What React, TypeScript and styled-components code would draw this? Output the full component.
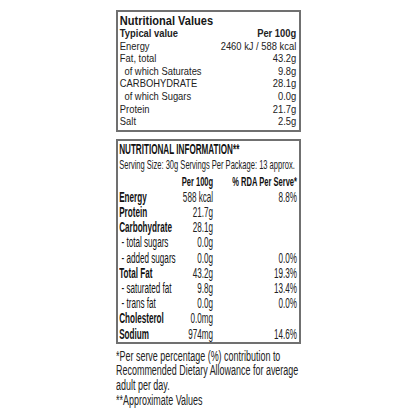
import React from 'react';
import styled, { createGlobalStyle } from 'styled-components';

const GlobalStyle = createGlobalStyle`
    html, body {
        margin: 0;
        padding: 0;
        background: #ffffff;
    }
    body {
        font-family: "Liberation Sans", Arial, sans-serif;
        color: #1a1a1a;
    }
`;

const Page = styled.div`
    width: 416px;
    height: 416px;
    display: flex;
    flex-direction: column;
    align-items: center;
    padding-top: 10px;
    box-sizing: border-box;
    overflow: hidden;
`;

const Column = styled.div`
    width: 185px;
    display: flex;
    flex-direction: column;
`;

const Panel = styled.section`
    border: 2px solid #707070;
    overflow: hidden;

    & + & {
        margin-top: 7px;
    }
`;

// the label uses a condensed face, so the content is laid out wide and squeezed
const Squeeze = styled.div<{ $scale: number }>`
    width: calc(100% / ${p => p.$scale});
    transform: scaleX(${p => p.$scale});
    transform-origin: left top;
`;

const ValuesBody = styled.div`
    padding: 3px 3px 1px 2px;
`;

const ValuesTitle = styled.div`
    font-size: 12px;
    font-weight: 700;
    line-height: 13px;
    color: #161616;
`;

const ValuesRow = styled.div<{ $bold?: boolean; $indent?: boolean }>`
    display: flex;
    justify-content: space-between;
    font-size: 10.2px;
    line-height: 12.6px;
    height: 12.6px;
    font-weight: ${p => (p.$bold ? 700 : 400)};
    padding-left: ${p => (p.$indent ? '5px' : '0')};
    color: #222;
`;

const InfoBody = styled.div`
    padding: 0 3.5px 0 2px;
`;

const InfoTitle = styled.div`
    font-size: 14px;
    font-weight: 700;
    line-height: 16px;
    color: #111;
`;

const Serving = styled.div`
    font-size: 13px;
    line-height: 16px;
    color: #222;
    white-space: nowrap;
`;

const InfoGrid = styled.div`
    display: grid;
    grid-template-columns: 104px 58px 1fr;
`;

const HeadCell = styled.div<{ $right?: boolean }>`
    font-size: 13px;
    font-weight: 700;
    line-height: 17px;
    text-align: ${p => (p.$right ? 'right' : 'left')};
    white-space: nowrap;
    color: #111;
`;

const Label = styled.div<{ $bold?: boolean }>`
    font-size: 14px;
    line-height: 15.2px;
    font-weight: ${p => (p.$bold ? 700 : 400)};
    padding-left: ${p => (p.$bold ? '0' : '4px')};
    white-space: nowrap;
    color: #111;
`;

const Amount = styled.div`
    font-size: 14px;
    line-height: 15.2px;
    text-align: right;
    white-space: nowrap;
    color: #222;
`;

const Notes = styled.p`
    margin: 0;
    font-size: 14px;
    line-height: 14.6px;
    color: #222;
    white-space: nowrap;
`;

const NotesBlock = styled.div`
    margin-top: 5px;
`;

const values: { label: string; value: string; indent?: boolean }[] = [
    { label: 'Energy', value: '2460 kJ / 588 kcal' },
    { label: 'Fat, total', value: '43.2g' },
    { label: 'of which Saturates', value: '9.8g', indent: true },
    { label: 'CARBOHYDRATE', value: '28.1g' },
    { label: 'of which Sugars', value: '0.0g', indent: true },
    { label: 'Protein', value: '21.7g' },
    { label: 'Salt', value: '2.5g' },
];

const info: { label: string; per100: string; rda: string; sub?: boolean }[] = [
    { label: 'Energy', per100: '588 kcal', rda: '8.8%' },
    { label: 'Protein', per100: '21.7g', rda: '' },
    { label: 'Carbohydrate', per100: '28.1g', rda: '' },
    { label: '- total sugars', per100: '0.0g', rda: '', sub: true },
    { label: '- added sugars', per100: '0.0g', rda: '0.0%', sub: true },
    { label: 'Total Fat', per100: '43.2g', rda: '19.3%' },
    { label: '- saturated fat', per100: '9.8g', rda: '13.4%', sub: true },
    { label: '- trans fat', per100: '0.0g', rda: '0.0%', sub: true },
    { label: 'Cholesterol', per100: '0.0mg', rda: '' },
    { label: 'Sodium', per100: '974mg', rda: '14.6%' },
];

export default function App() {
    return (
        <>
            <GlobalStyle />
            <Page>
                <Column>
                    <Panel>
                        <Squeeze $scale={0.92}>
                            <ValuesBody>
                                <ValuesTitle>Nutritional Values</ValuesTitle>
                                <ValuesRow $bold>
                                    <span>Typical value</span>
                                    <span>Per 100g</span>
                                </ValuesRow>
                                {values.map(v => (
                                    <ValuesRow key={v.label} $indent={v.indent}>
                                        <span>{v.label}</span>
                                        <span>{v.value}</span>
                                    </ValuesRow>
                                ))}
                            </ValuesBody>
                        </Squeeze>
                    </Panel>
                    <Panel>
                        <Squeeze $scale={0.58}>
                            <InfoBody>
                                <InfoTitle>NUTRITIONAL INFORMATION**</InfoTitle>
                                <Serving>Serving Size: 30g Servings Per Package: 13 approx.</Serving>
                                <InfoGrid>
                                    <HeadCell />
                                    <HeadCell $right>Per 100g</HeadCell>
                                    <HeadCell $right>% RDA Per Serve*</HeadCell>
                                    {info.map(r => (
                                        <React.Fragment key={r.label}>
                                            <Label $bold={!r.sub}>{r.label}</Label>
                                            <Amount>{r.per100}</Amount>
                                            <Amount>{r.rda}</Amount>
                                        </React.Fragment>
                                    ))}
                                </InfoGrid>
                            </InfoBody>
                        </Squeeze>
                    </Panel>
                    <NotesBlock>
                        <Squeeze $scale={0.64}>
                            <Notes>
                                *Per serve percentage (%) contribution to
                                <br />
                                Recommended Dietary Allowance for average
                                <br />
                                adult per day.
                                <br />
                                **Approximate Values
                            </Notes>
                        </Squeeze>
                    </NotesBlock>
                </Column>
            </Page>
        </>
    );
}
